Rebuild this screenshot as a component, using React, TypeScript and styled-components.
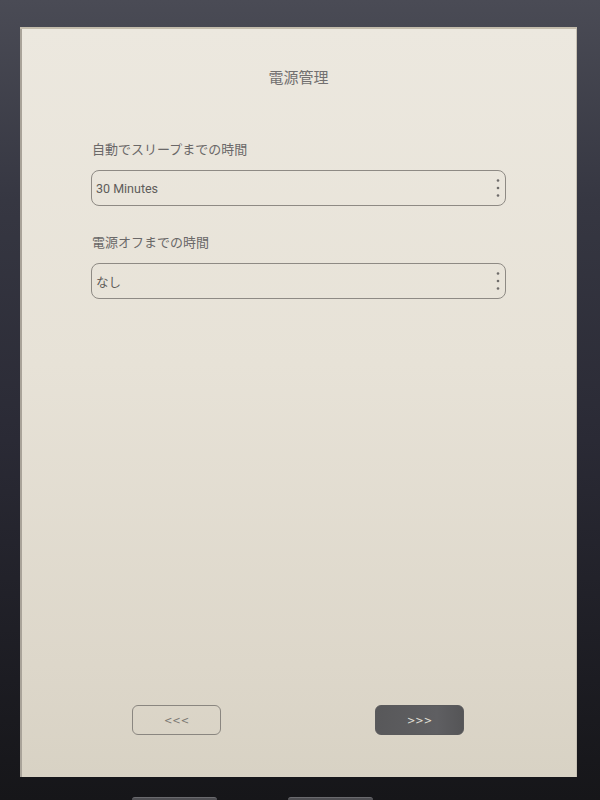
import React from "react";
import styled, { createGlobalStyle } from "styled-components";

const GlobalStyle = createGlobalStyle`
  html, body {
    margin: 0;
    padding: 0;
    height: 100%;
    overflow: hidden;
  }
  body {
    font-family: "Noto Sans CJK JP", "Noto Sans", Roboto, sans-serif;
  }
`;

const Device = styled.div`
  width: 600px;
  height: 800px;
  box-sizing: border-box;
  padding: 27px 23px 0 20px;
  display: flex;
  flex-direction: column;
  overflow: hidden;
  background: linear-gradient(180deg, #4a4b55 0%, #363742 25%, #2a2a35 55%, #1c1c22 85%, #161619 100%);
`;

const Screen = styled.div`
  flex-shrink: 0;
  height: 750px;
  display: flex;
  flex-direction: column;
  box-sizing: border-box;
  padding: 0 71px 42px;
  background: linear-gradient(180deg, #ece8df 0%, #e7e2d7 45%, #ddd7ca 85%, #d8d2c4 100%);
  box-shadow: inset 0 2px 0 #c4bdad, inset 2px 0 0 #a9a399, inset -1px 0 0 #c7c0b2;
`;

const Title = styled.div`
  margin-top: 40px;
  text-align: center;
  font-size: 15px;
  line-height: 20px;
  color: #727070;
`;

const Section = styled.div<{ $top: number }>`
  display: flex;
  flex-direction: column;
  margin-top: ${({ $top }) => $top}px;
`;

const Label = styled.div`
  font-size: 13px;
  line-height: 18px;
  color: #6a6868;
  padding-left: 1px;
`;

const Select = styled.div`
  margin-top: 12px;
  height: 36px;
  box-sizing: border-box;
  border: 1px solid #8e8a84;
  border-radius: 8px;
  display: flex;
  align-items: center;
  justify-content: space-between;
  padding: 0 4px 0 4px;
  font-size: 12.5px;
  color: #5e5c5a;
`;

const Value = styled.span`
  font-family: Roboto, "Noto Sans CJK JP", sans-serif;
`;

const Spacer = styled.div`
  flex: 1;
`;

const Footer = styled.div`
  display: flex;
  justify-content: space-between;
  padding: 0 42px 0 41px;
`;

const NavButton = styled.div<{ $dark?: boolean }>`
  width: 89px;
  height: 30px;
  box-sizing: border-box;
  border-radius: 6px;
  display: flex;
  align-items: center;
  justify-content: center;
  font-family: "DejaVu Sans", sans-serif;
  font-size: 10px;
  letter-spacing: 0;
  border: 1px solid ${({ $dark }) => ($dark ? "#5a5a5c" : "#8a8680")};
  background: ${({ $dark }) => ($dark ? "linear-gradient(90deg, #58585a, #5f5f62 70%, #555557)" : "transparent")};
  color: ${({ $dark }) => ($dark ? "#e4e1da" : "#7a7772")};
`;

const HardKeys = styled.div`
  flex-shrink: 0;
  display: flex;
  gap: 71px;
  padding-left: 112px;
  margin-top: 20px;
`;

const HardKey = styled.div`
  width: 85px;
  height: 10px;
  border-radius: 3px 3px 0 0;
  background: #4e4e52;
  border-top: 1px solid #6a6a6e;
`;

const MoreIcon = () => (
  <svg width="6" height="22" viewBox="0 0 6 22">
    <circle cx="3" cy="3.5" r="1.3" fill="#6e6c6a" />
    <circle cx="3" cy="11" r="1.3" fill="#6e6c6a" />
    <circle cx="3" cy="18.5" r="1.3" fill="#6e6c6a" />
  </svg>
);

export default function App() {
  const settings = [
    { label: "自動でスリープまでの時間", value: "30 Minutes", top: 53 },
    { label: "電源オフまでの時間", value: "なし", top: 27 },
  ];

  return (
    <>
      <GlobalStyle />
      <Device>
        <Screen>
          <Title>電源管理</Title>
          {settings.map((s) => (
            <Section key={s.label} $top={s.top}>
              <Label>{s.label}</Label>
              <Select>
                <Value>{s.value}</Value>
                <MoreIcon />
              </Select>
            </Section>
          ))}
          <Spacer />
          <Footer>
            <NavButton>&lt;&lt;&lt;</NavButton>
            <NavButton $dark>&gt;&gt;&gt;</NavButton>
          </Footer>
        </Screen>
        <HardKeys>
          <HardKey />
          <HardKey />
        </HardKeys>
      </Device>
    </>
  );
}
